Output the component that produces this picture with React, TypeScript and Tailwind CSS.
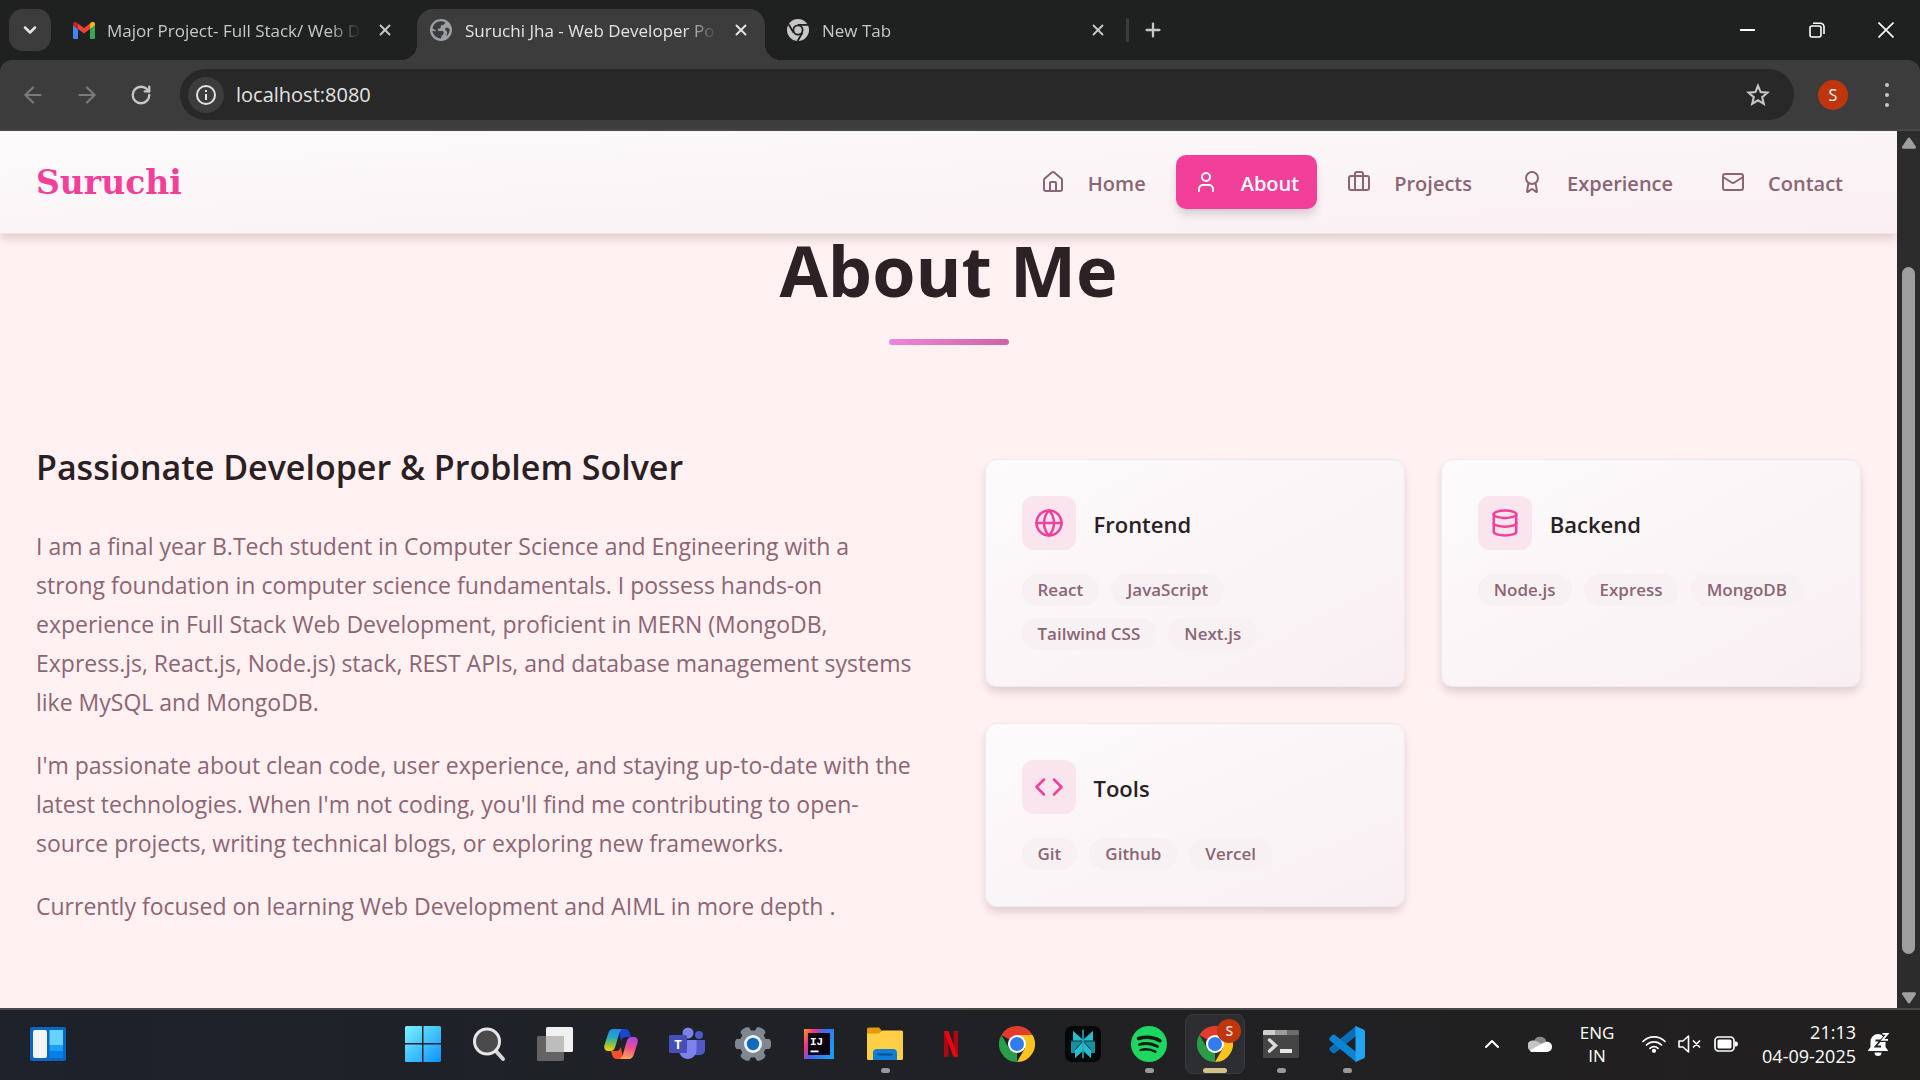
import { useId, type ReactNode } from "react";
import {
  ArrowLeft,
  ArrowRight,
  Award,
  Briefcase,
  ChevronDown,
  ChevronUp,
  Code,
  Database,
  Globe,
  House,
  Mail,
  Plus,
  RotateCw,
  User,
  X,
  type LucideIcon,
} from "lucide-react";

/* ---------- Browser window ---------- */

function GmailIcon() {
  return (
    <svg viewBox="0 0 22 17" className="h-[17px] w-[22px] shrink-0">
      <path d="M0 3v12.500A1.500 1.500 0 0 0 1.500 17H5V7z" fill="#4285f4" />
      <path d="M22 3v12.500a1.500 1.500 0 0 1-1.500 1.500H17V7z" fill="#34a853" />
      <path d="M17 1.500V7l5-3.800V2.200C22 .2 19.800-.8 18.200.4z" fill="#fbbc04" />
      <path d="M5 7V1.500l6 4.500 6-4.500V7l-6 4.500z" fill="#ea4335" />
      <path d="M0 2.200v1L5 7V1.500L3.800.4C2.200-.8 0 .2 0 2.200z" fill="#c5221f" />
    </svg>
  );
}

function SiteIcon() {
  return (
    <svg viewBox="0 0 24 24" className="size-6 shrink-0">
      <circle cx="12" cy="12" r="11" fill="#9aa0a6" />
      <path
        d="M11.500 3.200c1.800 0 3.500.4 5 1.400-.8.600-1 1.600-2 2.200-.9.500-2 .2-2.600 1-.6.900.4 1.700-.4 2.500-.8.700-2 0-2.700.8-.5.700.1 1.700 1 1.800h3.400c1.300 0 1.700 1.300 1.600 2.300-.2 1.500-1.600 1.600-2.200 2.700-.4.800-.3 1.800-.8 2.700C7.500 20.300 4 17 3.300 13l3.700.2c-.6-1.200-2.200-1.700-3.500-2.900C4.300 6.300 7.500 3.200 11.500 3.200zM20.600 11c.2 2.600-.8 5.200-2.900 7.200-.4-1.500.7-2.800.4-4.100-.3-1.200-1.700-1.500-1.900-2.600-.2-1.200.8-2 1.900-1.900z"
        fill="#3c3c3c"
      />
    </svg>
  );
}

function ChromeMono() {
  return (
    <svg viewBox="0 0 24 24" className="size-6 shrink-0">
      <circle cx="12" cy="12" r="11" fill="#c7c7c7" />
      <circle cx="12" cy="12" r="4.600" fill="none" stroke="#1f2121" strokeWidth="1.800" />
      <path d="M12 6.800h10M7.500 14.600 2.600 6.200M16.500 14.600 11.600 23" stroke="#1f2121" strokeWidth="1.800" />
    </svg>
  );
}

type TabProps = { title: string; icon: ReactNode; active?: boolean };

function Tab({ title, icon, active = false }: TabProps) {
  return (
    <div
      className={
        active
          ? "relative flex h-[51px] w-[348px] items-center rounded-t-2xl bg-[#3c3c3c] pr-3 pl-3 pb-[9px] text-[#e3e3e3]"
          : "flex h-[51px] w-[357px] items-center pr-5 pl-[13px] pb-[9px] text-[#c7c7c7]"
      }
    >
      {active && (
        <>
          <span className="absolute bottom-0 -left-4 size-4 bg-[radial-gradient(circle_at_0_0,transparent_16px,#3c3c3c_16px)]" />
          <span className="absolute -right-4 bottom-0 size-4 bg-[radial-gradient(circle_at_100%_0,transparent_16px,#3c3c3c_16px)]" />
        </>
      )}
      {icon}
      <span className="ml-3 min-w-0 flex-1 overflow-hidden pt-0.5 text-[17px] leading-6 whitespace-nowrap [mask-image:linear-gradient(to_right,black_calc(100%-32px),transparent)]">
        {title}
      </span>
      <button aria-label={`Close ${title}`} className="ml-3 flex size-6 items-center justify-center">
        <X size={18} strokeWidth={2.500} />
      </button>
    </div>
  );
}

function TabStrip() {
  return (
    <div className="flex h-[60px] items-end bg-[#1f2121] pl-[9px]">
      <button
        aria-label="Search tabs"
        className="mb-[9px] flex size-[42px] items-center justify-center rounded-[14px] bg-[#3c3c3c] text-[#e3e3e3]"
      >
        <ChevronDown size={20} strokeWidth={3} />
      </button>
      <div className="ml-[9px] flex">
        <Tab title="Major Project- Full Stack/ Web D" icon={<GmailIcon />} />
        <Tab title="Suruchi Jha - Web Developer Po" icon={<SiteIcon />} active />
        <div className="ml-2">
          <Tab title="New Tab" icon={<ChromeMono />} />
        </div>
      </div>
      <span className="-ml-1 mb-[18px] h-6 w-[3px] rounded bg-[#3c3c3c]" />
      <button aria-label="New tab" className="ml-3 mb-[18px] flex size-6 items-center justify-center text-[#c7c7c7]">
        <Plus size={22} strokeWidth={2.500} />
      </button>
      <div className="ml-auto flex h-full items-center text-white">
        <button aria-label="Minimize" className="flex h-full w-[69px] items-center justify-center">
          <span className="h-0.5 w-[15px] bg-white" />
        </button>
        <button aria-label="Restore" className="flex h-full w-[69px] items-center justify-center">
          <svg viewBox="0 0 16 16" className="size-4" fill="none" stroke="currentColor" strokeWidth="1.600">
            <rect x="1" y="4" width="11" height="11" rx="2" />
            <path d="M4 1.300h7.500a3.500 3.500 0 0 1 3.500 3.500V12" />
          </svg>
        </button>
        <button aria-label="Close" className="flex h-full w-[69px] items-center justify-center">
          <svg viewBox="0 0 16 16" className="size-4" fill="none" stroke="currentColor" strokeWidth="1.600">
            <path d="m.5.5 15 15M15.500.5l-15 15" />
          </svg>
        </button>
      </div>
    </div>
  );
}

function Toolbar() {
  return (
    <div className="bg-[#1f2121]">
      <div className="flex h-[71px] items-center rounded-t-xl border-b-2 border-[#474747] bg-[#3c3c3c] pl-5">
        <button aria-label="Back" className="text-[#7b7b7b]">
          <ArrowLeft size={26} strokeWidth={2} />
        </button>
        <button aria-label="Forward" className="ml-[28px] text-[#7b7b7b]">
          <ArrowRight size={26} strokeWidth={2} />
        </button>
        <button aria-label="Reload" className="ml-[30px] text-[#c7c7c7]">
          <RotateCw size={22} strokeWidth={2.500} />
        </button>
        <div className="ml-7 flex h-[51px] flex-1 items-center rounded-full bg-[#282828] pr-6 pl-2">
          <button
            aria-label="View site information"
            className="flex size-9 items-center justify-center rounded-full bg-[#3c3c3c] text-[#e3e3e3]"
          >
            <svg viewBox="0 0 20 20" className="size-5" fill="none" stroke="currentColor" strokeWidth="2">
              <circle cx="10" cy="10" r="9" />
              <path d="M10 9v6M10 5v2" />
            </svg>
          </button>
          <input
            aria-label="Address"
            defaultValue="localhost:8080"
            className="ml-3 min-w-0 flex-1 bg-transparent text-xl text-[#e3e3e3] outline-none"
          />
          <button aria-label="Bookmark this tab" className="text-[#c7c7c7]">
            <svg viewBox="0 0 24 24" className="size-6" fill="none" stroke="currentColor" strokeWidth="2.100">
              <path d="m12 2.800 2.600 6.300 6.800.6-5.200 4.500 1.600 6.600-5.800-3.500-5.800 3.500 1.600-6.600-5.200-4.500 6.800-.6z" />
            </svg>
          </button>
        </div>
        <button
          aria-label="Profile"
          className="ml-6 flex size-[30px] items-center justify-center rounded-full bg-[#bf360c] text-base text-white"
        >
          S
        </button>
        <button aria-label="Menu" className="mr-[18px] ml-6 flex w-[30px] flex-col items-center gap-1.5 text-[#c7c7c7]">
          <span className="size-1 rounded-full bg-current" />
          <span className="size-1 rounded-full bg-current" />
          <span className="size-1 rounded-full bg-current" />
        </button>
      </div>
    </div>
  );
}

/* ---------- Portfolio page ---------- */

const navItems: { label: string; icon: LucideIcon; active?: boolean }[] = [
  { label: "Home", icon: House },
  { label: "About", icon: User, active: true },
  { label: "Projects", icon: Briefcase },
  { label: "Experience", icon: Award },
  { label: "Contact", icon: Mail },
];

function SiteHeader() {
  return (
    <header className="relative z-10 flex h-[103px] items-center justify-between border-b border-[#efe6ea] bg-linear-to-br from-[#fdfbfb] via-[#faf5f7] to-[#fbeff3] px-9 shadow-[0_6px_9px_-1px_rgba(60,30,45,0.16)]">
      <a href="#home" className="pt-0.5 font-['DejaVu_Serif',serif] text-[33px] leading-10 font-bold text-[#f43f9a]">
        Suruchi
      </a>
      <nav className="flex gap-3">
        {navItems.map(({ label, icon: Icon, active }) => (
          <a
            key={label}
            href={`#${label.toLowerCase()}`}
            className={
              active
                ? "flex h-[54px] items-center gap-[23px] rounded-[10px] bg-[#f2409a] px-[18px] pt-[3px] text-xl font-semibold text-white shadow-[0_6px_9px_-1px_rgba(60,30,45,0.18)]"
                : "flex h-[54px] items-center gap-[23px] rounded-[10px] px-[18px] pt-[3px] text-xl font-semibold text-[#8c6574]"
            }
          >
            <Icon size={24} strokeWidth={2} className="mb-1" />
            <span>{label}</span>
          </a>
        ))}
      </nav>
    </header>
  );
}

const skills: { title: string; icon: LucideIcon; tags: string[] }[] = [
  { title: "Frontend", icon: Globe, tags: ["React", "JavaScript", "Tailwind CSS", "Next.js"] },
  { title: "Backend", icon: Database, tags: ["Node.js", "Express", "MongoDB"] },
  { title: "Tools", icon: Code, tags: ["Git", "Github", "Vercel"] },
];

function SkillCard({ title, icon: Icon, tags }: (typeof skills)[number]) {
  return (
    <article className="rounded-xl border border-[#eeeaf0] bg-linear-to-br from-[#fdfbfb] via-[#faf5f7] to-[#f9eff3] p-9 shadow-[0_6px_9px_-1px_rgba(60,30,45,0.16)]">
      <div className="flex items-center gap-[18px]">
        <span className="flex size-[54px] items-center justify-center rounded-xl bg-[#fae4ee] text-[#f2409a]">
          <Icon size={30} strokeWidth={2} />
        </span>
        <h3 className="pt-0.5 text-[22px] leading-8 font-semibold text-[#2a2024]">{title}</h3>
      </div>
      <ul className="mt-6 flex flex-wrap gap-3">
        {tags.map((tag) => (
          <li key={tag} className="rounded-full bg-[#f7f1f4] px-4 py-1 text-[17px] leading-6 font-semibold text-[#8c6574]">
            {tag}
          </li>
        ))}
      </ul>
    </article>
  );
}

function AboutSection() {
  return (
    <main className="flex-1 px-9">
      <h1 className="text-center text-[70px] leading-[72px] font-bold text-[#2d2125]">About Me</h1>
      <div className="mx-auto mt-[33px] h-1.5 w-[120px] rounded-full bg-linear-to-r from-[#ec87d8] to-[#cf62a6]" />
      <div className="mt-[95px] grid grid-cols-2 items-center gap-[72px]">
        <div className="pt-[3px]">
          <h2 className="text-[34px] leading-[48px] font-semibold text-[#2a2024]">
            Passionate Developer &amp; Problem Solver
          </h2>
          <div className="mt-9 flex flex-col gap-6 text-[23px] leading-[39px] text-[#8c6574]">
            <p>
              I am a final year B.Tech student in Computer Science and Engineering with a strong foundation in computer
              science fundamentals. I possess hands-on experience in Full Stack Web Development, proficient in MERN
              (MongoDB, Express.js, React.js, Node.js) stack, REST APIs, and database management systems like MySQL and
              MongoDB.
            </p>
            <p>
              I'm passionate about clean code, user experience, and staying up-to-date with the latest technologies. When
              I'm not coding, you'll find me contributing to open-source projects, writing technical blogs, or exploring
              new frameworks.
            </p>
            <p>Currently focused on learning Web Development and AIML in more depth .</p>
          </div>
        </div>
        <div className="grid grid-cols-2 gap-9">
          {skills.map((skill) => (
            <SkillCard key={skill.title} {...skill} />
          ))}
        </div>
      </div>
    </main>
  );
}

function ScrollBar() {
  return (
    <div className="flex w-[23px] flex-col items-center bg-[#2c2c2c] pt-[5px] pb-[3px] text-[#9f9f9f]">
      <svg viewBox="0 0 16 14" className="h-3.5 w-4" fill="currentColor">
        <path d="M6.800 2.200 1.200 10.500A1.400 1.400 0 0 0 2.400 12.700h11.200a1.400 1.400 0 0 0 1.200-2.200L9.200 2.200a1.400 1.400 0 0 0-2.400 0z" />
      </svg>
      <div className="mt-[117px] mb-[37px] w-[13px] flex-1 rounded-full bg-[#9f9f9f]" />
      <svg viewBox="0 0 16 14" className="h-3.5 w-4" fill="currentColor">
        <path d="M6.800 11.800 1.200 3.500A1.400 1.400 0 0 1 2.400 1.300h11.200a1.400 1.400 0 0 1 1.200 2.200l-5.600 8.300a1.400 1.400 0 0 1-2.400 0z" />
      </svg>
    </div>
  );
}

/* ---------- Taskbar ---------- */

function WidgetsIcon() {
  return (
    <svg viewBox="0 0 36 34" className="h-[34px] w-9">
      <rect width="36" height="34" rx="2" fill="#0a66c0" />
      <rect x="3" y="3" width="14" height="28" rx="2" fill="#f3f3f5" />
      <path d="M19.500 3H33v15H19.500z" fill="#66d3ff" />
      <path d="M19.500 18H33v6H19.500z" fill="#1b9ef5" />
      <path d="M19.500 24H33v7H19.500z" fill="#0580ea" />
    </svg>
  );
}

function StartIcon() {
  const id = useId();
  return (
    <svg viewBox="0 0 36 36" className="size-9">
      <linearGradient id={id} x1="0" y1="0" x2="36" y2="36" gradientUnits="userSpaceOnUse">
        <stop stopColor="#7cf3ff" />
        <stop offset="1" stopColor="#0a92ff" />
      </linearGradient>
      <path d="M1.500 0H17v17H0V1.500A1.500 1.500 0 0 1 1.500 0zM18.500 0h16A1.500 1.500 0 0 1 36 1.500V17H18.500zM0 18.500h17V36H1.500A1.500 1.500 0 0 1 0 34.500zM18.500 18.500H36v16a1.500 1.500 0 0 1-1.500 1.500h-16z" fill={`url(#${id})`} />
    </svg>
  );
}

function SearchIcon() {
  return (
    <svg viewBox="0 0 34 36" className="h-9 w-[34px]">
      <path d="m23 24 8 9" stroke="#d4d6da" strokeWidth="4" strokeLinecap="round" />
      <circle cx="15" cy="15.500" r="12.500" fill="#4a4a4c" stroke="#e6e6e8" strokeWidth="3" />
    </svg>
  );
}

function TaskViewIcon() {
  return (
    <svg viewBox="0 0 36 36" className="size-9">
      <rect x="0" y="10" width="27" height="25" rx="1.500" fill="#636363" />
      <rect x="9" y="1" width="27" height="25" rx="1.500" fill="#f0f0f0" />
      <path d="M9 10h18v16H9z" fill="#bdbdbd" />
    </svg>
  );
}

function CopilotIcon() {
  const id = useId();
  return (
    <svg viewBox="0 0 34 32" className="h-8 w-[34px]">
      <linearGradient id={`${id}a`} x1="8" y1="0" x2="6" y2="23" gradientUnits="userSpaceOnUse">
        <stop stopColor="#1b8af0" />
        <stop offset=".4" stopColor="#25a7c4" />
        <stop offset=".7" stopColor="#7fc24a" />
        <stop offset="1" stopColor="#ffd10a" />
      </linearGradient>
      <linearGradient id={`${id}b`} x1="28" y1="8" x2="22" y2="32" gradientUnits="userSpaceOnUse">
        <stop stopColor="#a345ee" />
        <stop offset=".5" stopColor="#f0508c" />
        <stop offset="1" stopColor="#ffae50" />
      </linearGradient>
      <path d="M15 1h6c3 0 4 1.500 5 4.500l1 3.500h-5c-3 0-4 2-5 4z" fill="#1c45d0" />
      <path d="M19 31h-6c-3 0-4-1.500-5-4.500L7 23h5c3 0 4-2 5-4z" fill="#f4502c" />
      <path d="M9 1h10c-2 0-3 2-4 5l-3.500 12c-1 3.500-2.500 5-5 5H4c-3 0-4.500-2.500-3.500-6L4 6c1-3.500 2.500-5 5-5z" fill={`url(#${id}a)`} />
      <path d="M25 31H15c2 0 3-2 4-5l3.500-12c1-3.500 2.500-5 5-5H30c3 0 4.500 2.500 3.500 6L30 26c-1 3.500-2.500 5-5 5z" fill={`url(#${id}b)`} />
    </svg>
  );
}

function TeamsIcon() {
  return (
    <svg viewBox="0 0 36 34" className="h-[34px] w-9">
      <circle cx="30" cy="8" r="4" fill="#5059c9" />
      <path d="M24 13h12v10c0 3-2.500 5-5.500 5H24z" fill="#5059c9" />
      <circle cx="19" cy="6" r="5.500" fill="#7b83eb" />
      <path d="M10 13h17.500v10c0 5-4 9-8.800 9S10 28 10 23z" fill="#7b83eb" />
      <rect x="0" y="8" width="18" height="18" rx="1.500" fill="#464eb8" />
      <text x="9" y="22" fontSize="13" fontWeight="700" textAnchor="middle" fill="#fff">
        T
      </text>
    </svg>
  );
}

function SettingsIcon() {
  return (
    <svg viewBox="0 0 36 36" className="size-9">
      <g fill="#7f8890">
        <circle cx="18" cy="18" r="13.500" />
        {[0, 60, 120].map((angle) => (
          <path
            key={angle}
            d="M0 15.500 1.500 13H34.500L36 15.500v5L34.500 23H1.500L0 20.500z"
            transform={`rotate(${angle} 18 18)`}
          />
        ))}
      </g>
      <circle cx="18" cy="18" r="9" fill="#f1f1f3" />
      <circle cx="18" cy="18" r="6.200" fill="#0f6cbd" />
    </svg>
  );
}

function IntellijIcon() {
  const id = useId();
  return (
    <svg viewBox="0 0 30 30" className="size-[30px]">
      <linearGradient id={id} x1="0" y1="4" x2="30" y2="20" gradientUnits="userSpaceOnUse">
        <stop stopColor="#ff8a2b" />
        <stop offset=".22" stopColor="#f5317f" />
        <stop offset=".5" stopColor="#3a6cf5" />
        <stop offset="1" stopColor="#1a9cf5" />
      </linearGradient>
      <path d="M0 0h30v30H0z" fill={`url(#${id})`} />
      <path d="M4 4h22v22H4z" fill="#0b0410" />
      <text x="6" y="15.500" fontSize="11" fontWeight="700" fontFamily="'Liberation Mono', monospace" fill="#fff">
        IJ
      </text>
      <path d="M6.500 21.500h8v1.800h-8z" fill="#fff" />
    </svg>
  );
}

function ExplorerIcon() {
  return (
    <svg viewBox="0 0 36 34" className="h-[34px] w-9">
      <path d="M0 2a1.500 1.500 0 0 1 1.500-1.500H12l3.500 4V8H0z" fill="#e09a0a" />
      <path d="M0 6.500h12l3.500-3H34.500A1.500 1.500 0 0 1 36 5v26.500A1.500 1.500 0 0 1 34.500 33h-33A1.500 1.500 0 0 1 0 31.500z" fill="#ffd045" />
      <path d="M6 33v-7a4 4 0 0 1 4-4h16a4 4 0 0 1 4 4v7z" fill="#0f7fd6" />
      <path d="M11 27.500h14" stroke="#0a4f94" strokeWidth="2" strokeLinecap="round" />
    </svg>
  );
}

function NetflixIcon() {
  return (
    <svg viewBox="0 0 14 26" className="h-[26px] w-3.5">
      <path d="M0 0h4.500v25.500L0 26zM9.500 0H14v26l-4.500-.5z" fill="#b1060f" />
      <path d="M0 0h4.500L14 26l-4.700-.5z" fill="#e50914" />
    </svg>
  );
}

function ChromeIcon() {
  return (
    <svg viewBox="0 0 36 36" className="size-9">
      <path d="M18 18 2.400 9A18 18 0 0 1 33.600 9z" fill="#e33b2e" />
      <path d="M18 18 18 36A18 18 0 0 1 2.400 9l7.800 13.500z" fill="#2a9d48" />
      <path d="M18 9h15.600A18 18 0 0 1 18 36l7.800-13.500z" fill="#fcc31e" />
      <circle cx="18" cy="18" r="9" fill="#fff" />
      <circle cx="18" cy="18" r="7" fill="#2f7df0" />
    </svg>
  );
}

function PerplexityIcon() {
  return (
    <svg viewBox="0 0 36 36" className="size-9">
      <rect width="36" height="36" rx="7" fill="#050808" />
      <path d="M18 14 8 5v10H6v12h4v5l8-7.500 8 7.500v-5h4V15h-2V5z" fill="#168f9e" />
      <path d="M18 14 8 5v10h10zM18 14l10-9v10H18zM18 16 10 24v8l8-7.500 8 7.500v-8z" fill="#25bccb" />
      <path d="M18 3v30M6 15h24M18 15l-8 9M18 15l8 9" stroke="#0a3b42" strokeWidth="1" fill="none" />
      <path d="M18 4v28" stroke="#2fd0dc" strokeWidth="1.200" />
    </svg>
  );
}

function SpotifyIcon() {
  return (
    <svg viewBox="0 0 36 36" className="size-9" fill="none" stroke="#111a14" strokeLinecap="round">
      <circle cx="18" cy="18" r="18" fill="#1ed760" stroke="none" />
      <path d="M7.500 12.500c7-2 15.500-1.300 21.500 2.200" strokeWidth="3.400" />
      <path d="M8.500 18.500c6-1.700 12.500-1 18 2" strokeWidth="2.800" />
      <path d="M9.500 24c5-1.300 10.500-.7 15 1.800" strokeWidth="2.300" />
    </svg>
  );
}

function ProfileChromeIcon() {
  return (
    <span className="relative">
      <ChromeIcon />
      <span className="absolute -top-[7px] -right-2 flex size-6 items-center justify-center rounded-full bg-[#bf360c] text-sm font-semibold text-[#f6d9cf]">
        S
      </span>
    </span>
  );
}

function TerminalIcon() {
  return (
    <svg viewBox="0 0 36 28" className="h-7 w-9">
      <rect width="36" height="28" rx="1.500" fill="#454545" />
      <path d="M0 1.500A1.500 1.500 0 0 1 1.500 0H12v5H0z" fill="#cfcfcf" />
      <path d="M12 0h12v5H12z" fill="#9b9b9b" />
      <path d="M24 0h10.500A1.500 1.500 0 0 1 36 1.500V5H24z" fill="#6c6c6c" />
      <path d="m6.500 10 6 5.500-6 5.500" stroke="#dcdcdc" strokeWidth="3.400" fill="none" strokeLinecap="round" />
      <path d="M17 19h12v4H17z" fill="#e6e6e6" />
    </svg>
  );
}

function VsCodeIcon() {
  return (
    <svg viewBox="0 0 36 36" className="size-9">
      <path d="M27 0v10L6 27c-.8.600-1.800.6-2.500 0l-2.600-2.400c-.9-.8-.9-2.200 0-3z" fill="#0a6db8" />
      <path d="M27 36V26L6 9c-.8-.6-1.800-.6-2.500 0L.9 11.400c-.9.800-.9 2.200 0 3z" fill="#0a85d4" />
      <path d="m26.500 0 8 3.600A2.500 2.500 0 0 1 36 5.900v24.200a2.500 2.500 0 0 1-1.500 2.300l-8 3.600z" fill="#22a4f1" />
    </svg>
  );
}

type App = { name: string; icon: ReactNode; state?: "running" | "focused" };

const apps: App[] = [
  { name: "Start", icon: <StartIcon /> },
  { name: "Search", icon: <SearchIcon /> },
  { name: "Task view", icon: <TaskViewIcon /> },
  { name: "Copilot", icon: <CopilotIcon /> },
  { name: "Teams", icon: <TeamsIcon /> },
  { name: "Settings", icon: <SettingsIcon /> },
  { name: "IntelliJ IDEA", icon: <IntellijIcon /> },
  { name: "File Explorer", icon: <ExplorerIcon />, state: "running" },
  { name: "Netflix", icon: <NetflixIcon /> },
  { name: "Chrome", icon: <ChromeIcon /> },
  { name: "Perplexity", icon: <PerplexityIcon /> },
  { name: "Spotify", icon: <SpotifyIcon />, state: "running" },
  { name: "Chrome, profile S", icon: <ProfileChromeIcon />, state: "focused" },
  { name: "Terminal", icon: <TerminalIcon />, state: "running" },
  { name: "Visual Studio Code", icon: <VsCodeIcon />, state: "running" },
];

function AppButton({ name, icon, state }: App) {
  return (
    <button
      aria-label={name}
      className={
        state === "focused"
          ? "relative flex size-[60px] items-center justify-center rounded-lg border border-[#3a3b3e] bg-[#2d2e31]"
          : "relative flex size-[60px] items-center justify-center"
      }
    >
      {icon}
      {state === "running" && <span className="absolute bottom-px h-[5px] w-[9px] rounded-full bg-[#97999b]" />}
      {state === "focused" && <span className="absolute bottom-0 h-[5px] w-6 rounded-full bg-[#d4bf8c]" />}
    </button>
  );
}

function CloudIcon() {
  return (
    <svg viewBox="0 0 24 16" className="h-4 w-6">
      <path d="M6 5a6.500 6.500 0 0 1 12.500 1L12 9z" fill="#8a8a8a" />
      <path d="M5.500 4.500C9 4.500 12 7 15 9L4 15A5.300 5.300 0 0 1 5.500 4.500z" fill="#c4c4c4" />
      <path d="M17.500 6A5 5 0 0 1 24 11a5 5 0 0 1-5 5H5c-1.500 0-2.600-.5-3.400-1.500L15 7z" fill="#fff" />
    </svg>
  );
}

function WifiIcon() {
  return (
    <svg viewBox="0 0 24 18" className="h-[18px] w-6" fill="none" stroke="#fff" strokeWidth="1.700" strokeLinecap="round">
      <path d="M1 6.500a15.500 15.500 0 0 1 22 0M4.500 10a10.600 10.600 0 0 1 15 0M8 13.300a5.700 5.700 0 0 1 8 0" />
      <circle cx="12" cy="15.800" r="1.300" fill="#fff" />
    </svg>
  );
}

function MuteIcon() {
  return (
    <svg viewBox="0 0 24 18" className="h-[18px] w-6" fill="none" stroke="#fff" strokeWidth="1.600" strokeLinejoin="round">
      <path d="M1 6h4l5.500-5v16L5 12H1zM15 5.500l7 7M22 5.500l-7 7" />
    </svg>
  );
}

function BatteryIcon() {
  return (
    <svg viewBox="0 0 24 16" className="h-4 w-6">
      <rect x="1" y="1" width="19" height="14" rx="3.500" fill="none" stroke="#fff" strokeWidth="1.700" />
      <rect x="3.500" y="3.500" width="14" height="9" rx="1.500" fill="#fff" />
      <path d="M21 5.500h1a1.800 1.800 0 0 1 1.800 1.800v1.400a1.800 1.800 0 0 1-1.800 1.800h-1z" fill="#fff" />
    </svg>
  );
}

function BellIcon() {
  return (
    <svg viewBox="0 0 22 24" className="h-6 w-[22px]" fill="none">
      <path d="M10 2a7.500 7.500 0 0 0-7.500 7.500V15L0 18.500V19h20v-.5L17.500 15V9.500A7.500 7.500 0 0 0 10 2z" fill="#fff" />
      <path d="M6.500 20.500h7a3.500 3.500 0 0 1-7 0z" fill="#fff" />
      <path d="M7.500 8.500h5l-5 6h5.500" stroke="#222327" strokeWidth="1.800" />
      <path d="M14 2h5.500L14.500 8H20" stroke="#222327" strokeWidth="3.800" />
      <path d="M14.500 1.800h5l-5 6H20" stroke="#fff" strokeWidth="1.800" />
    </svg>
  );
}

function Taskbar() {
  return (
    <footer className="flex h-[72px] items-center border-t-2 border-[#474747] bg-linear-to-r from-[#1d222b] via-[#202124] to-[#221f1f] px-[30px] pb-0.5 text-white">
      <button aria-label="Widgets">
        <WidgetsIcon />
      </button>
      <div className="flex-[325]" />
      <div className="flex shrink-0 gap-1.5">
        {apps.map((app) => (
          <AppButton key={app.name} {...app} />
        ))}
      </div>
      <div className="flex-[102]" />
      <button aria-label="Show hidden icons">
        <ChevronUp size={24} strokeWidth={2} />
      </button>
      <button aria-label="OneDrive" className="ml-6">
        <CloudIcon />
      </button>
      <button className="ml-6 w-[42px] text-center text-[17px] leading-[23px]">
        ENG
        <br />
        IN
      </button>
      <button aria-label="Network, volume and battery" className="ml-6 flex items-center gap-3">
        <WifiIcon />
        <MuteIcon />
        <BatteryIcon />
      </button>
      <button className="ml-6 text-right text-lg leading-6">
        21:13
        <br />
        04-09-2025
      </button>
      <button aria-label="Notifications" className="ml-3">
        <BellIcon />
      </button>
    </footer>
  );
}

export default function Desktop() {
  return (
    <div className="flex h-screen flex-col font-['Open_Sans',sans-serif]">
      <TabStrip />
      <Toolbar />
      <div className="flex min-h-0 flex-1">
        <div className="flex min-w-0 flex-1 flex-col bg-[#fff0f1]">
          <SiteHeader />
          <AboutSection />
        </div>
        <ScrollBar />
      </div>
      <Taskbar />
    </div>
  );
}
